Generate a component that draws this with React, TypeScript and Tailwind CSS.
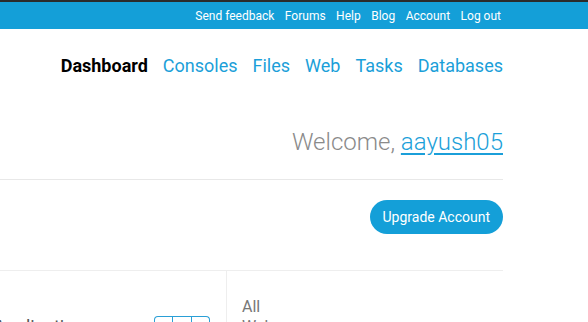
const topLinks = ['Send feedback', 'Forums', 'Help', 'Blog', 'Account', 'Log out'];
const navLinks = ['Consoles', 'Files', 'Web', 'Tasks', 'Databases'];

export default function App() {
  return (
    <div className="h-[322px] w-[588px] overflow-hidden bg-white font-['Roboto',sans-serif]">
      {/* top bar */}
      <div className="border-t-2 border-[#2b2b2b] bg-[#149fd8]">
        <div className="flex h-[27px] w-[501px] items-center justify-end gap-[10.5px] text-[12px] text-white">
          {topLinks.map((l) => (
            <a key={l}>{l}</a>
          ))}
        </div>
      </div>

      <div className="w-[503px]">
        {/* main nav */}
        <div className="flex justify-end gap-[15px] pt-[24px] text-[18px] leading-[26px]">
          <a className="font-bold text-black">Dashboard</a>
          {navLinks.map((l) => (
            <a key={l} className="text-[#1b9fd9]">
              {l}
            </a>
          ))}
        </div>

        {/* welcome */}
        <div className="flex justify-end pt-[47px] pb-[21px] text-[24px] leading-[32px] font-light text-[#8a8a8a]">
          <span>
            Welcome,{' '}
            <a className="text-[#1b9fd9] underline underline-offset-[3px]">aayush05</a>
          </span>
        </div>

        <div className="border-t border-[#e8e8e8]" />

        {/* upgrade */}
        <div className="flex justify-end pt-[20px] pb-[36px]">
          <button className="h-[34px] rounded-full bg-[#149fd8] px-[13px] text-[14px] text-white">
            Upgrade Account
          </button>
        </div>

        {/* panels */}
        <div className="flex border-t border-[#eeeeee]">
          <div className="flex w-[226px] items-start justify-between pt-[44px] pr-[16px]">
            <span className="-ml-[6px] mt-[1px] text-[18px] leading-[22px] text-[#555]">Applications</span>
            <div className="mt-[1px] flex h-[8px] w-[56px] overflow-hidden rounded-t-[4px] border border-b-0 border-[#2a9fd6]">
              <div className="flex-1 border-r border-[#2a9fd6]" />
              <div className="flex-1 border-r border-[#2a9fd6]" />
              <div className="flex-1" />
            </div>
          </div>
          <div className="flex-1 border-l border-[#eeeeee] pt-[26px] pl-[15px] text-[16px] leading-[20px] text-[#777]">
            <div>All</div>
            <div>Web apps</div>
          </div>
        </div>
      </div>
    </div>
  );
}
